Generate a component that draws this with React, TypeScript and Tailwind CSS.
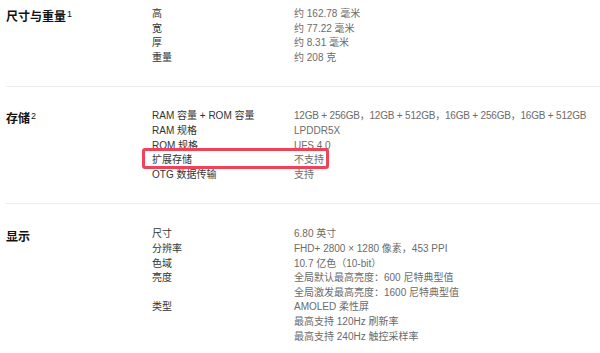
const SPECS = [
  {
    title: "尺寸与重量",
    sup: "1",
    pt: "pt-[7px]",
    rows: [
      { label: "高", values: ["约 162.78 毫米"] },
      { label: "宽", values: ["约 77.22 毫米"] },
      { label: "厚", values: ["约 8.31 毫米"] },
      { label: "重量", values: ["约 208 克"] },
    ],
  },
  {
    title: "存储",
    sup: "2",
    pt: "pt-[22px]",
    rows: [
      { label: "RAM 容量 + ROM 容量", values: ["12GB + 256GB，12GB + 512GB，16GB + 256GB，16GB + 512GB"], tight: true },
      { label: "RAM 规格", values: ["LPDDR5X"] },
      { label: "ROM 规格", values: ["UFS 4.0"] },
      { label: "扩展存储", values: ["不支持"], highlight: true },
      { label: "OTG 数据传输", values: ["支持"] },
    ],
  },
  {
    title: "显示",
    sup: "",
    pt: "pt-[23px]",
    rows: [
      { label: "尺寸", values: ["6.80 英寸"] },
      { label: "分辨率", values: ["FHD+ 2800 × 1280 像素，453 PPI"] },
      { label: "色域", values: ["10.7 亿色（10-bit）"] },
      { label: "亮度", values: ["全局默认最高亮度：600 尼特典型值", "全局激发最高亮度：1600 尼特典型值"] },
      { label: "类型", values: ["AMOLED 柔性屏", "最高支持 120Hz 刷新率", "最高支持 240Hz 触控采样率"] },
    ],
  },
];

export default function App() {
  return (
    <div className="w-[600px] h-[353px] overflow-hidden bg-white pl-[6px] font-['Liberation_Sans','Noto_Sans_CJK_SC',sans-serif]">
      {SPECS.map((section, i) => (
        <div
          key={i}
          className={`flex ${section.pt} pb-[21px] ${i < SPECS.length - 1 ? "border-b border-[#ededed]" : ""}`}
        >
          {/* Section title */}
          <div className="w-[146px] shrink-0 mt-[3px] text-[12px] leading-[15px] font-bold text-[#111]">
            {section.title}
            {section.sup && <sup className="text-[9px] font-normal text-[#111] ml-[1px] -top-[4px]">{section.sup}</sup>}
          </div>

          <div className="flex flex-col text-[10px] leading-[14.6px]">
            {section.rows.map((row, j) => (
              <div key={j} className="relative flex">
                {row.highlight && (
                  <div className="absolute left-[-10px] top-[-5px] w-[187px] h-[21px] rounded-[3px] border-[3px] border-[#f0435a] bg-white"></div>
                )}
                <div className="relative w-[142px] shrink-0 text-[#333]">{row.label}</div>
                <div className={`relative flex flex-col text-[#6b6b6b] ${row.tight ? "tracking-[-0.2px]" : ""}`}>
                  {row.values.map((v, k) => (
                    <span key={k}>{v}</span>
                  ))}
                </div>
              </div>
            ))}
          </div>
        </div>
      ))}
    </div>
  );
}
